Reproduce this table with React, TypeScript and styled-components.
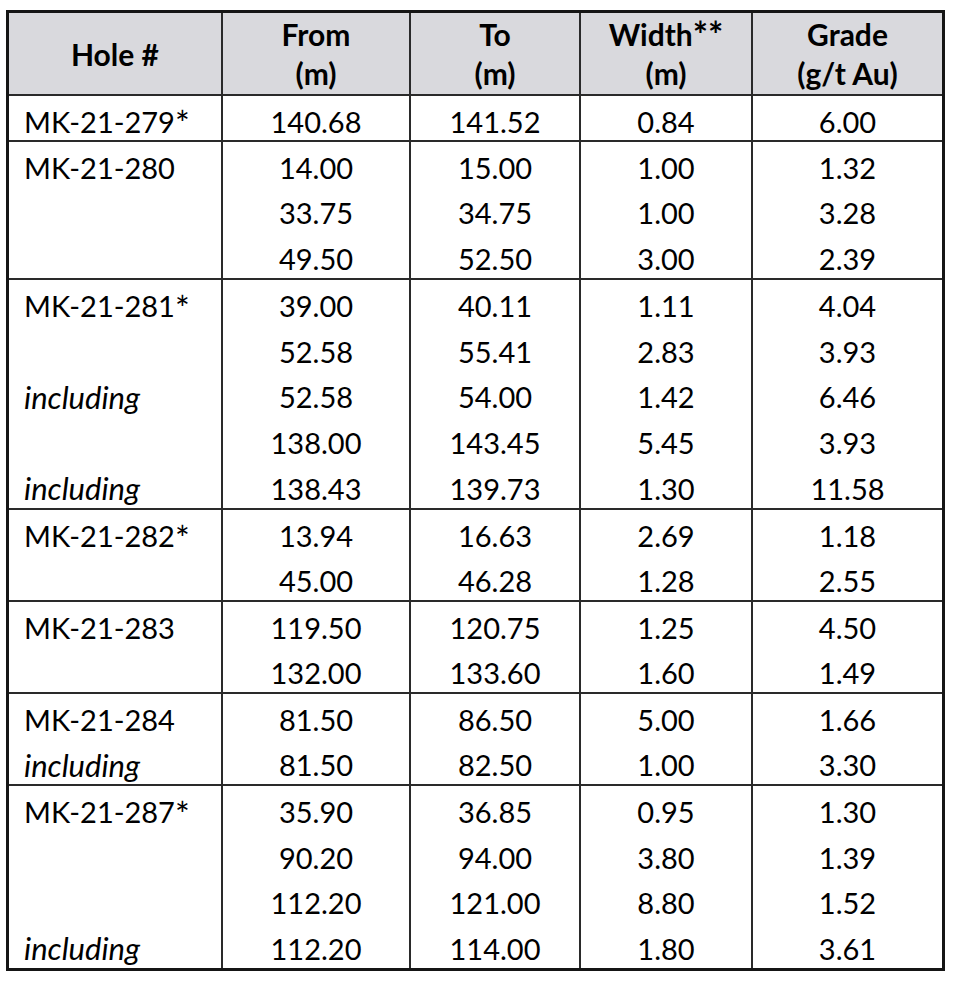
import React from "react";
import styled, { createGlobalStyle } from "styled-components";

const Global = createGlobalStyle`
  html, body { margin: 0; padding: 0; background: #ffffff; }
  body { font-family: Lato, "Open Sans", sans-serif; color: #000; }
`;

const Page = styled.div`
  padding: 10px 0 0 6px;
  width: 956px;
  height: 984px;
  box-sizing: border-box;
`;

const Table = styled.div`
  width: 939px;
  border: 3px solid #151515;
  box-sizing: border-box;
  display: flex;
  flex-direction: column;
`;

const cols = "212px 188px 170px 172px 191px";

const HeadRow = styled.div`
  display: grid;
  grid-template-columns: ${cols};
  height: 83px;
  background: #d9d9dd;
  border-bottom: 2px solid #2a2a2a;
  box-sizing: border-box;
`;

const HeadCell = styled.div<{ $first?: boolean }>`
  display: flex;
  flex-direction: column;
  align-items: center;
  justify-content: center;
  border-left: ${(p) => (p.$first ? "none" : "2px solid #2a2a2a")};
  font-weight: 700;
  font-size: 30px;
  line-height: 39px;
  padding-top: 1px;
  text-align: center;
`;

const Group = styled.div<{ $h: number; $first?: boolean }>`
  display: grid;
  grid-template-columns: ${cols};
  grid-auto-rows: 1fr;
  height: ${(p) => p.$h}px;
  border-top: ${(p) => (p.$first ? "none" : "2px solid #2a2a2a")};
  box-sizing: content-box;
`;

const Cell = styled.div<{ $first?: boolean; $italic?: boolean }>`
  display: flex;
  align-items: center;
  justify-content: ${(p) => (p.$first ? "flex-start" : "center")};
  padding: 6px 0 0 ${(p) => (p.$first ? "15px" : "0")};
  border-left: ${(p) => (p.$first ? "none" : "2px solid #2a2a2a")};
  font-size: ${(p) => (p.$italic ? "31px" : "29px")};
  font-style: ${(p) => (p.$italic ? "italic" : "normal")};
  white-space: nowrap;
`;

const Star = styled.span`
  font-size: 1.2em;
  line-height: 0;
  position: relative;
  top: 2px;
`;

type Line = [string, string, string, string, string];

const groups: { h: number; lines: Line[] }[] = [
  { h: 44, lines: [["MK-21-279*", "140.68", "141.52", "0.84", "6.00"]] },
  {
    h: 136,
    lines: [
      ["MK-21-280", "14.00", "15.00", "1.00", "1.32"],
      ["", "33.75", "34.75", "1.00", "3.28"],
      ["", "49.50", "52.50", "3.00", "2.39"],
    ],
  },
  {
    h: 228,
    lines: [
      ["MK-21-281*", "39.00", "40.11", "1.11", "4.04"],
      ["", "52.58", "55.41", "2.83", "3.93"],
      ["including", "52.58", "54.00", "1.42", "6.46"],
      ["", "138.00", "143.45", "5.45", "3.93"],
      ["including", "138.43", "139.73", "1.30", "11.58"],
    ],
  },
  {
    h: 90,
    lines: [
      ["MK-21-282*", "13.94", "16.63", "2.69", "1.18"],
      ["", "45.00", "46.28", "1.28", "2.55"],
    ],
  },
  {
    h: 90,
    lines: [
      ["MK-21-283", "119.50", "120.75", "1.25", "4.50"],
      ["", "132.00", "133.60", "1.60", "1.49"],
    ],
  },
  {
    h: 90,
    lines: [
      ["MK-21-284", "81.50", "86.50", "5.00", "1.66"],
      ["including", "81.50", "82.50", "1.00", "3.30"],
    ],
  },
  {
    h: 182,
    lines: [
      ["MK-21-287*", "35.90", "36.85", "0.95", "1.30"],
      ["", "90.20", "94.00", "3.80", "1.39"],
      ["", "112.20", "121.00", "8.80", "1.52"],
      ["including", "112.20", "114.00", "1.80", "3.61"],
    ],
  },
];

const headers: string[][] = [
  ["Hole #"],
  ["From", "(m)"],
  ["To", "(m)"],
  ["Width**", "(m)"],
  ["Grade", "(g/t Au)"],
];

function renderText(v: string) {
  const m = v.match(/^(.*?)(\*+)$/);
  if (!m) return v;
  return (
    <>
      {m[1]}
      <Star>{m[2]}</Star>
    </>
  );
}

export default function App() {
  return (
    <>
      <Global />
      <Page>
        <Table>
          <HeadRow>
            {headers.map((h, i) => (
              <HeadCell key={i} $first={i === 0}>
                {h.map((t, j) => (
                  <span key={j}>{renderText(t)}</span>
                ))}
              </HeadCell>
            ))}
          </HeadRow>
          {groups.map((g, gi) => (
            <Group key={gi} $h={g.h} $first={gi === 0}>
              {g.lines.map((line, li) =>
                line.map((v, ci) => (
                  <Cell
                    key={`${li}-${ci}`}
                    $first={ci === 0}
                    $italic={ci === 0 && v === "including"}
                  >
                    {renderText(v)}
                  </Cell>
                ))
              )}
            </Group>
          ))}
        </Table>
      </Page>
    </>
  );
}
